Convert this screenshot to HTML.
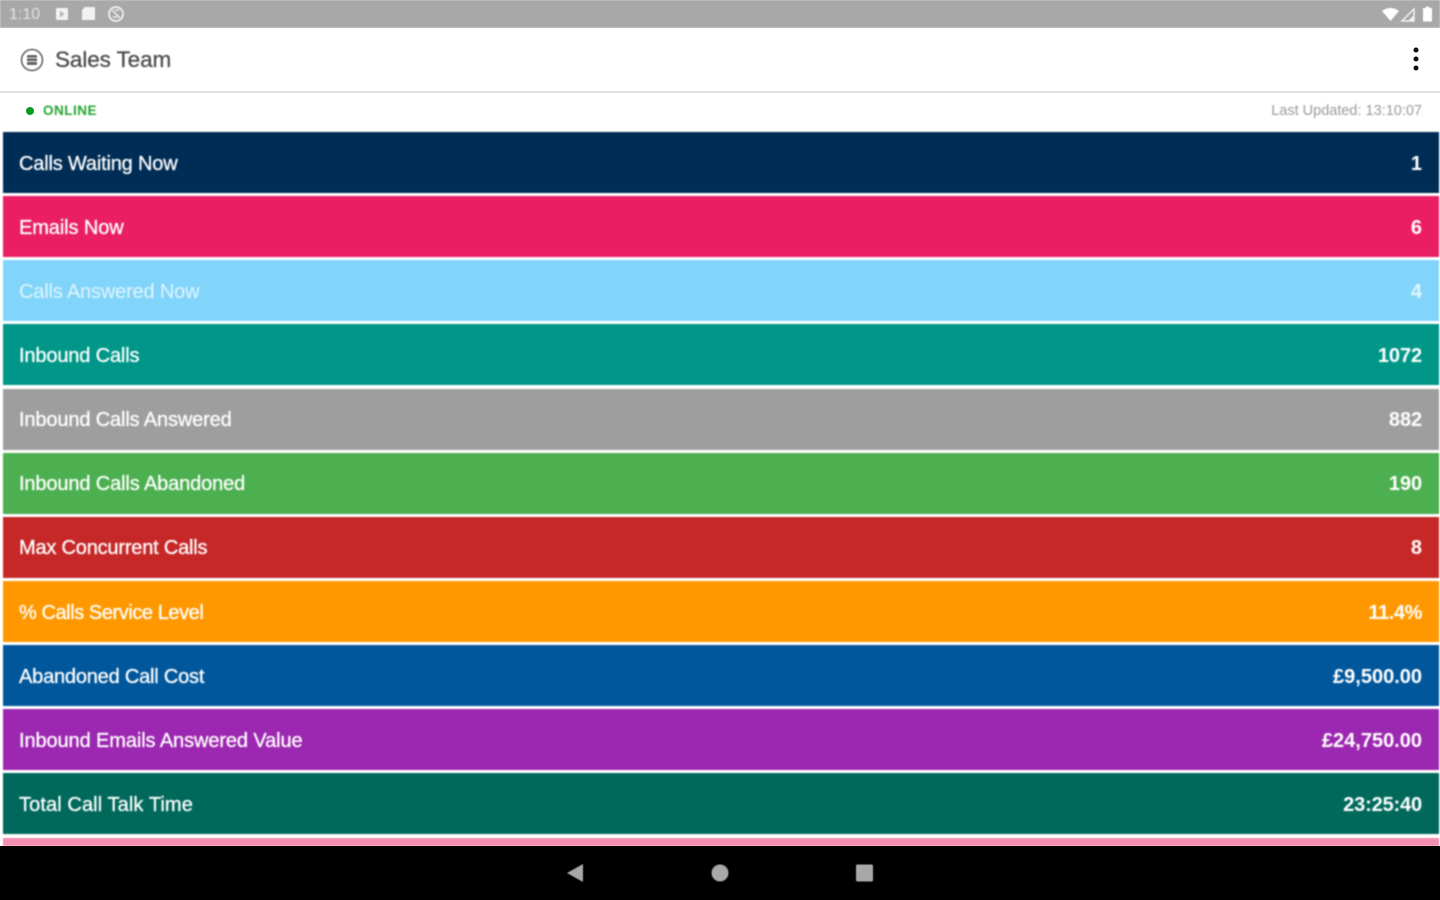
<!DOCTYPE html>
<html lang="en">
<head>
<meta charset="utf-8">
<title>Sales Team</title>
<style>
html,body{margin:0;padding:0;width:1440px;height:900px;overflow:hidden;background:#fff;font-family:"Liberation Sans",sans-serif}
.abs{position:absolute}
#status{left:0;top:0;width:1440px;height:27.500px;background:#a8a8a8;filter:blur(.5px)}
#appbar{left:0;top:28px;width:1440px;height:63px;background:#fff}
#rule{left:0;top:91px;width:1440px;height:2px;background:#e2e2e2}
.row{position:absolute;left:3px;width:1436px;height:61px;color:#fff;font-size:20px;line-height:61px;filter:blur(.8px)}
.row .l{position:absolute;left:16px;top:2px;white-space:nowrap;-webkit-text-stroke:.3px #fff}
.row .r{position:absolute;right:17px;top:2px;white-space:nowrap;font-weight:bold}
.u{margin-top:-1px}
.t{position:absolute;white-space:nowrap;filter:blur(.7px)}
svg{position:absolute;display:block}
</style>
</head>
<body>
<div class="abs" id="status"></div>
<div class="t" style="left:9px;top:6px;font-size:16px;line-height:17px;color:#e4e4e4">1:10</div>
<svg style="left:0;top:0;filter:blur(.6px)" width="1440" height="27" viewBox="0 0 1440 27">
<rect x="56" y="8" width="12" height="12" rx="1.500" fill="#f2f2f2"/>
<path d="M60 10.500l4.500 3.500-4.500 3.500z" fill="#b8b8b8"/>
<path d="M85 7h9a1 1 0 0 1 1 1v11a1 1 0 0 1-1 1H83a1 1 0 0 1-1-1v-9z" fill="#f2f2f2"/>
<circle cx="116" cy="14" r="7" fill="none" stroke="#eee" stroke-width="1.800"/>
<path d="M112 10l8 8M119 10h-4M113 17h4" stroke="#eee" stroke-width="1.500" fill="none"/>
<path d="M1382 11c5-4 12-4 17 0l-8.500 10z" fill="#fff"/>
<path d="M1414 9v12h-12z" fill="none" stroke="#f2f2f2" stroke-width="1.500"/>
<path d="M1408 21l6-6v6z" fill="#f2f2f2"/>
<path d="M1423 8h3V6.500h3V8h3v13.500h-9z" fill="#fff"/>
</svg>

<div class="abs" id="appbar"></div>
<div class="abs" id="rule"></div>
<svg style="left:18px;top:46px;filter:blur(.5px)" width="28" height="28" viewBox="0 0 28 28">
<circle cx="14" cy="14" r="10.500" fill="none" stroke="#777" stroke-width="1.800"/>
<rect x="9" y="9" width="10" height="10" rx="1" fill="#666"/>
<path d="M9 12h10M9 15.500h10" stroke="#ddd" stroke-width="1"/>
</svg>
<div class="t" style="left:55px;top:46px;font-size:22.500px;letter-spacing:-.1px;line-height:28px;color:#444;-webkit-text-stroke:.2px #444">Sales Team</div>
<svg style="left:1408px;top:44px;filter:blur(.3px)" width="16" height="30" viewBox="0 0 16 30">
<circle cx="8" cy="6" r="2.500" fill="#111"/><circle cx="8" cy="15" r="2.500" fill="#111"/><circle cx="8" cy="24" r="2.500" fill="#111"/>
</svg>

<svg style="left:24px;top:105px;filter:blur(.3px)" width="12" height="12" viewBox="0 0 12 12"><circle cx="6" cy="6" r="4" fill="#0a9a1d"/></svg>
<div class="t" style="left:43px;top:103px;font-size:13.500px;letter-spacing:.5px;line-height:16px;font-weight:bold;color:#22a52f">ONLINE</div>
<div class="t" style="right:18px;top:103px;font-size:14.500px;line-height:16px;color:#999">Last Updated: 13:10:07</div>

<div class="row" style="top:132px;background:#002d55"><span class="l" style="letter-spacing:-.18px">Calls Waiting Now</span><span class="r">1</span></div>
<div class="row" style="top:196px;background:#e91e63"><span class="l" style="letter-spacing:-.1px">Emails Now</span><span class="r">6</span></div>
<div class="row" style="top:260px;background:#81d4fa;color:#e3f5fe"><span class="l" style="-webkit-text-stroke:0;letter-spacing:-.17px">Calls Answered Now</span><span class="r">4</span></div>
<div class="row" style="top:324px;background:#009688"><span class="l" style="letter-spacing:-.15px">Inbound Calls</span><span class="r" style="letter-spacing:-.1px">1072</span></div>
<div class="row" style="top:389px;background:#9e9e9e"><span class="l u" style="letter-spacing:-.14px">Inbound Calls Answered</span><span class="r u" style="letter-spacing:-.1px">882</span></div>
<div class="row" style="top:453px;background:#4caf50"><span class="l u" style="letter-spacing:-.13px">Inbound Calls Abandoned</span><span class="r u" style="letter-spacing:-.1px">190</span></div>
<div class="row" style="top:517px;background:#c62828"><span class="l u" style="letter-spacing:-.2px">Max Concurrent Calls</span><span class="r u">8</span></div>
<div class="row" style="top:581px;background:#ff9800"><span class="l" style="letter-spacing:-.43px">% Calls Service Level</span><span class="r" style="letter-spacing:-.4px">11.4%</span></div>
<div class="row" style="top:645px;background:#01579b"><span class="l" style="letter-spacing:-.2px">Abandoned Call Cost</span><span class="r">£9,500.00</span></div>
<div class="row" style="top:709px;background:#9c27b0"><span class="l" style="letter-spacing:-.1px">Inbound Emails Answered Value</span><span class="r">£24,750.00</span></div>
<div class="row" style="top:773px;background:#00695c"><span class="l" style="letter-spacing:.1px">Total Call Talk Time</span><span class="r" style="letter-spacing:-.15px">23:25:40</span></div>
<div class="abs" style="left:3px;top:838px;width:1436px;height:8px;background:#f48fb1;filter:blur(.5px)"></div>

<div class="abs" style="left:0;top:846px;width:1440px;height:54px;background:#000"></div>
<svg style="left:0;top:846px;filter:blur(.6px)" width="1440" height="54" viewBox="0 0 1440 54">
<path d="M567 27l16-9v18z" fill="#a8a8a8"/>
<circle cx="720" cy="27" r="8.500" fill="#a8a8a8"/>
<rect x="856" y="18.500" width="17" height="17" rx="1.500" fill="#a8a8a8"/>
</svg>
</body>
</html>
